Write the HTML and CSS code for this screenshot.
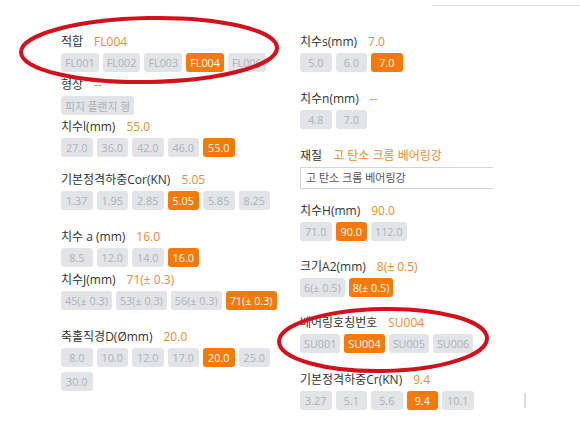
FILE: index.html
```html
<!DOCTYPE html>
<html lang="ko">
<head>
<meta charset="utf-8">
<link rel="stylesheet" href="styles.css">
</head>
<body>
<div class="page">
  <div class="topline"></div>
  <div class="columns">
    <div class="col col-left">
      <section class="field">
        <div class="label">적합<span class="value">FL004</span></div>
        <div class="chips">
          <span class="chip">FL001</span><span class="chip">FL002</span><span class="chip">FL003</span><span class="chip active">FL004</span><span class="chip">FL006</span>
        </div>
      </section>
      <section class="field gap-s">
        <div class="label">형상<span class="value">--</span></div>
        <div class="chips"><span class="chip">피지 플랜지 형</span></div>
      </section>
      <section class="field gap-xs">
        <div class="label">치수l(mm)<span class="value">55.0</span></div>
        <div class="chips">
          <span class="chip">27.0</span><span class="chip">36.0</span><span class="chip">42.0</span><span class="chip">46.0</span><span class="chip active">55.0</span>
        </div>
      </section>
      <section class="field gap-m">
        <div class="label">기본정격하중Cor(KN)<span class="value">5.05</span></div>
        <div class="chips">
          <span class="chip">1.37</span><span class="chip">1.95</span><span class="chip">2.85</span><span class="chip active">5.05</span><span class="chip">5.85</span><span class="chip">8.25</span>
        </div>
      </section>
      <section class="field gap-l">
        <div class="label">치수 a (mm)<span class="value">16.0</span></div>
        <div class="chips">
          <span class="chip">8.5</span><span class="chip">12.0</span><span class="chip">14.0</span><span class="chip active">16.0</span>
        </div>
      </section>
      <section class="field gap-s">
        <div class="label">치수J(mm)<span class="value">71(± 0.3)</span></div>
        <div class="chips">
          <span class="chip">45(± 0.3)</span><span class="chip">53(± 0.3)</span><span class="chip">56(± 0.3)</span><span class="chip active">71(± 0.3)</span>
        </div>
      </section>
      <section class="field gap-l">
        <div class="label">축홀직경D(Ømm)<span class="value">20.0</span></div>
        <div class="chips">
          <span class="chip">8.0</span><span class="chip">10.0</span><span class="chip">12.0</span><span class="chip">17.0</span><span class="chip active">20.0</span><span class="chip">25.0</span><span class="chip">30.0</span>
        </div>
      </section>
    </div>
    <div class="col col-right">
      <section class="field">
        <div class="label">치수s(mm)<span class="value">7.0</span></div>
        <div class="chips">
          <span class="chip">5.0</span><span class="chip">6.0</span><span class="chip active">7.0</span>
        </div>
      </section>
      <section class="field gap-l">
        <div class="label">치수n(mm)<span class="value">--</span></div>
        <div class="chips">
          <span class="chip">4.8</span><span class="chip">7.0</span>
        </div>
      </section>
      <section class="field gap-l">
        <div class="label">재질<span class="value">고 탄소 크롬 베어링강</span></div>
        <div class="input">고 탄소 크롬 베어링강</div>
      </section>
      <section class="field gap-m2">
        <div class="label">치수H(mm)<span class="value">90.0</span></div>
        <div class="chips">
          <span class="chip">71.0</span><span class="chip active">90.0</span><span class="chip">112.0</span>
        </div>
      </section>
      <section class="field gap-l2">
        <div class="label">크기A2(mm)<span class="value">8(± 0.5)</span></div>
        <div class="chips">
          <span class="chip">6(± 0.5)</span><span class="chip active">8(± 0.5)</span>
        </div>
      </section>
      <section class="field gap-l2">
        <div class="label">베어링호칭번호<span class="value">SU004</span></div>
        <div class="chips">
          <span class="chip">SU001</span><span class="chip active">SU004</span><span class="chip">SU005</span><span class="chip">SU006</span>
        </div>
      </section>
      <section class="field gap-l">
        <div class="label">기본정격하중Cr(KN)<span class="value">9.4</span></div>
        <div class="chips">
          <span class="chip">3.27</span><span class="chip">5.1</span><span class="chip">5.6</span><span class="chip active">9.4</span><span class="chip">10.1</span><span class="scrollmark"></span>
        </div>
      </section>
    </div>
  </div>
  <svg class="marks" width="580" height="440" viewBox="0 0 580 440">
    <ellipse cx="149" cy="50" rx="128" ry="32" transform="rotate(-1 149 50)"/>
    <ellipse cx="383" cy="340" rx="104" ry="31" transform="rotate(-1 383 340)"/>
  </svg>
</div>
</body>
</html>
```
FILE: styles.css
```css
* { box-sizing: border-box; }
html, body { margin: 0; padding: 0; background: #fff; }
body {
  font-family: "Open Sans", "Noto Sans CJK KR", sans-serif;
  color: #333;
}
.page {
  position: relative;
  width: 580px;
  height: 440px;
  overflow: hidden;
}
.topline {
  margin: 5px 0 0 432px;
  height: 1px;
  background: #e2e2e2;
}
.columns {
  display: flex;
  padding-top: 27px;
}
.col-left {
  width: 239px;
  margin-left: 61px;
}
.col-right {
  flex: 1;
}
.label {
  font-size: 12px;
  line-height: 18px;
  height: 18px;
  margin-bottom: 2px;
  white-space: nowrap;
  color: #333;
}
.value {
  margin-left: 11px;
  color: #e98c35;
}
.chips {
  display: flex;
  flex-wrap: wrap;
  gap: 5px 4px;
  align-items: center;
}
.chip {
  display: inline-flex;
  align-items: center;
  justify-content: center;
  height: 19px;
  min-width: 31.5px;
  padding: 0 4px;
  border-radius: 3px;
  background: #e3e4e8;
  color: #aeb1b7;
  font-size: 10.8px;
  white-space: nowrap;
}
.chip.active {
  background: #f57a0a;
  color: #fff;
}
.input {
  width: 193px;
  height: 22px;
  border: 1px solid #d6d6d6;
  border-right: none;
  padding-left: 5px;
  font-size: 11px;
  line-height: 20px;
  color: #555;
}
.gap-xs { margin-top: 3px; }
.gap-s { margin-top: 4px; }
.gap-m { margin-top: 14px; }
.gap-m2 { margin-top: 13px; }
.gap-l { margin-top: 18px; }
.gap-l2 { margin-top: 17px; }
.scrollmark {
  width: 2px;
  height: 15px;
  margin-left: 46px;
  background: #dcdcdc;
}
.marks {
  position: absolute;
  left: 0;
  top: 0;
  pointer-events: none;
}
.marks ellipse {
  fill: none;
  stroke: #d3111c;
  stroke-width: 4;
}
```
